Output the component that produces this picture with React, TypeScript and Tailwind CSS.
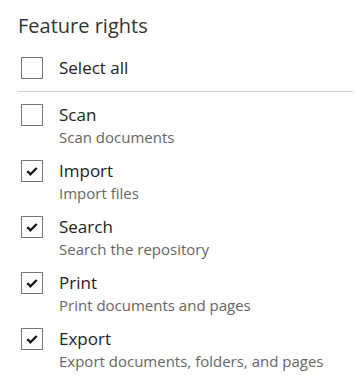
import React from "react";

const Box = ({ checked }: { checked: boolean }) => (
  <div className="w-[22px] h-[22px] border border-[#767676] bg-white shrink-0 relative">
    {checked && (
      <svg width="22" height="22" viewBox="0 0 22 22" className="absolute -left-px -top-px">
        <path d="M6.3 11.2 L9.4 14.3 L15.7 8" fill="none" stroke="#1a1a1a" strokeWidth="2.4" />
      </svg>
    )}
  </div>
);

const items = [
  { t: "Scan", d: "Scan documents", c: false },
  { t: "Import", d: "Import files", c: true },
  { t: "Search", d: "Search the repository", c: true },
  { t: "Print", d: "Print documents and pages", c: true },
  { t: "Export", d: "Export documents, folders, and pages", c: true },
];

export default function App() {
  return (
    <div className="w-[355px] h-[381px] bg-white pl-[18px] pr-[2px] pt-[13px]" style={{ fontFamily: '"Open Sans", sans-serif' }}>
      <div className="text-[20px] leading-[26px] text-[#333]">Feature rights</div>
      <div className="flex items-center gap-[16px] pl-[3px] mt-[18px] h-[22px]">
        <Box checked={false} />
        <span className="text-[17px] text-[#222] leading-[22px]">Select all</span>
      </div>
      <div className="h-px bg-[#d2d2d2] mt-[12px]" />
      <div className="flex flex-col pt-[12px]">
        {items.map((it) => (
          <div key={it.t} className="flex gap-[16px] pl-[3px] h-[56px]">
            <Box checked={it.c} />
            <div className="flex flex-col">
              <span className="text-[17px] text-[#222] leading-[22px]">{it.t}</span>
              <span className="text-[15px] text-[#666] leading-[20px] mt-[1px]">{it.d}</span>
            </div>
          </div>
        ))}
      </div>
    </div>
  );
}
